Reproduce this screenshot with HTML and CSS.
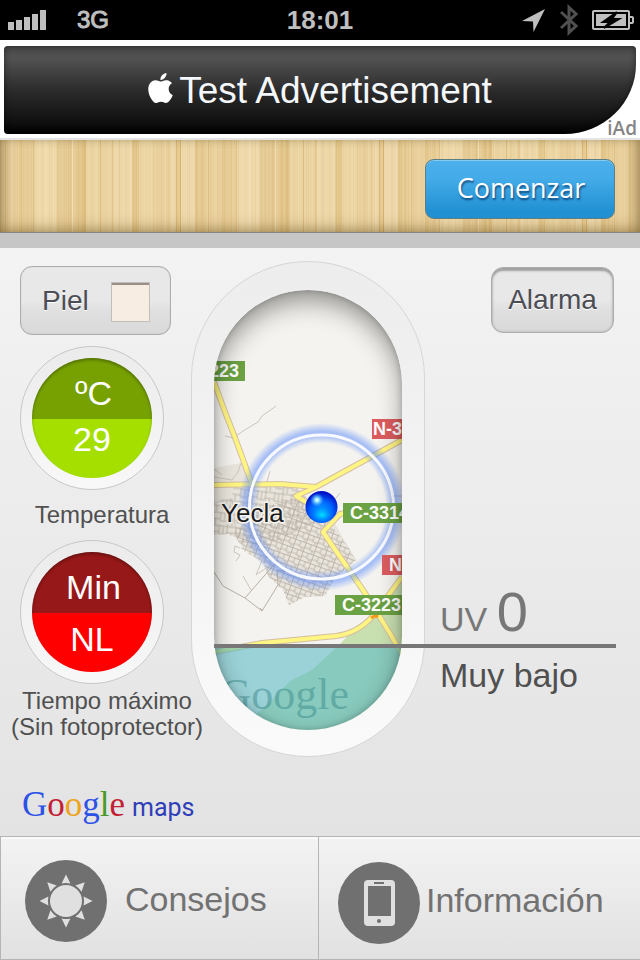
FILE: index.html
```html
<!DOCTYPE html>
<html lang="es">
<head>
<meta charset="utf-8">
<meta name="viewport" content="width=device-width, initial-scale=1">
<title>UV</title>
<link rel="stylesheet" href="styles.css">
</head>
<body>
<header class="status">
  <div class="status-left">
    <svg class="signal" width="38" height="20" viewBox="0 0 38 20" aria-hidden="true"><path d="M0 12h6v8H0zM8 10h6v10H8zM16 7h6v13h-6zM24 4h6v16h-6zM32 0h6v20h-6z"/></svg>
    <span class="network">3G</span>
  </div>
  <span class="clock">18:01</span>
  <div class="status-right">
    <svg width="23" height="23" viewBox="0 0 23 23" aria-hidden="true"><path d="M0 12 23 0 11.500 23 11 12.500z"/></svg>
    <svg class="bluetooth" width="18" height="32" viewBox="0 0 18 32" aria-hidden="true"><path d="M1 8 16 22 9 28.500V3.500L16 10 1 24"/></svg>
    <svg width="42" height="20" viewBox="0 0 42 20" aria-hidden="true">
      <path fill-rule="evenodd" d="M2 0h34q2 0 2 2v4h2q2 0 2 2v4q0 2-2 2h-2v4q0 2-2 2H2q-2 0-2-2V2q0-2 2-2zM2 2v16h34V2zM38 8v4h2V8z"/>
      <path d="M4 4h30v12H4z"/>
      <path class="bolt" d="M25 2 11 12h7l-6 6 15-9h-7z"/>
    </svg>
  </div>
</header>

<aside class="ad">
  <a class="ad-banner" href="#">
    <svg width="25" height="30" viewBox="2 0 20 24" aria-hidden="true"><path d="M12.152 6.896c-.948 0-2.415-1.078-3.960-1.040-2.040.027-3.910 1.183-4.961 3.014-2.117 3.675-.546 9.103 1.519 12.090 1.013 1.454 2.208 3.090 3.792 3.039 1.520-.065 2.090-.987 3.935-.987 1.831 0 2.350.987 3.960.948 1.637-.026 2.676-1.480 3.676-2.948 1.156-1.688 1.636-3.325 1.662-3.415-.039-.013-3.182-1.221-3.220-4.857-.026-3.040 2.480-4.494 2.597-4.559-1.429-2.090-3.623-2.324-4.390-2.376-2-.156-3.675 1.090-4.610 1.090zM15.530 3.830c.843-1.012 1.400-2.427 1.245-3.830-1.207.052-2.662.805-3.532 1.818-.780.896-1.454 2.338-1.273 3.714 1.338.104 2.715-.688 3.559-1.701"/></svg>
    <span>Test Advertisement</span>
  </a>
  <span class="ad-tag">iAd</span>
</aside>

<div class="toolbar">
  <button class="start" type="button">Comenzar</button>
</div>

<main class="main">
  <section class="gauges">
    <button class="key skin" type="button">Piel <span class="swatch"></span></button>
    <figure class="gauge">
      <div class="dial dial-green"><div class="disc"><span>ºC</span><span>29</span></div></div>
      <figcaption>Temperatura</figcaption>
    </figure>
    <figure class="gauge gauge-time">
      <div class="dial dial-red"><div class="disc"><span>Min</span><span>NL</span></div></div>
      <figcaption>Tiempo máximo<br>(Sin fotoprotector)</figcaption>
    </figure>
    <div class="maps-logo"><span class="google"><span class="blue">G</span><span class="red">o</span><span class="gold">o</span><span class="blue">g</span><span class="green">l</span><span class="red">e</span></span><span class="maps">maps</span></div>
  </section>

  <section class="capsule">
    <div class="map">
      <svg viewBox="214 290 188 440" role="img" aria-label="Yecla">
        <defs>
          <pattern id="streets" width="11" height="9" patternUnits="userSpaceOnUse" patternTransform="rotate(20)">
            <path class="street" d="M0 .5H11M0 5H6M6 6H11M.5 0V9M6 0V6M9 6V9"/>
          </pattern>
          <pattern id="blocks" width="17" height="13" patternUnits="userSpaceOnUse" patternTransform="rotate(7)">
            <path class="street" d="M0 1H17M0 7H10M10 9H17M1 0V13M10 0V9M14 1V9M5 7V13"/>
          </pattern>
          <radialGradient id="ball" cx=".5" cy=".65" r=".6">
            <stop offset="0" stop-color="#00a8ff"/><stop offset=".55" stop-color="#0068ff"/><stop offset="1" stop-color="#0010c8"/>
          </radialGradient>
          <radialGradient id="shine"><stop offset="0" stop-color="#fff"/><stop offset=".3" stop-color="#8fe4ff"/><stop offset="1" stop-color="#40a0ff" stop-opacity="0"/></radialGradient>
          <radialGradient id="low-light"><stop offset="0" stop-color="#00e4ff"/><stop offset="1" stop-color="#00a0ff" stop-opacity="0"/></radialGradient>
          <radialGradient id="halo" gradientUnits="userSpaceOnUse" cx="321.500" cy="507" r="84">
            <stop offset=".76" stop-color="#4a80ff" stop-opacity="0"/><stop offset=".85" stop-color="#4a80ff" stop-opacity=".45"/><stop offset=".9" stop-color="#4a80ff" stop-opacity=".45"/><stop offset="1" stop-color="#4a80ff" stop-opacity="0"/>
          </radialGradient>
        </defs>
        <rect class="land" x="214" y="290" width="188" height="440"/>
        <path class="park" d="M402 575 375 613 353 630 341 643 312 670 290 681 272 700 250 720V730H402z"/>
        <path class="town" d="M214 468 241 463 252 486 296 487 308 499 332 518 347 545 356 560 335 578 325 596 305 597 289 605 283 590 268 576 263 562 248 554 243 543 229 534 214 535z"/>
        <path class="blocks" d="M234 484 296 487 308 499 320 520 270 545 248 549 229 534 214 535V500L232 499z"/>
        <path class="streets" d="M262 508 300 496 325 518 347 545 356 560 335 578 325 596 305 597 289 605 283 590 268 576 263 562 242 550 234 532z"/>
        <path class="lane" d="M214 477 232 480 238 472 241 463M214 503 232 499 236 533M214 469 222 475M266 485 270 471M340 493 332 503M392 496H402M392 496V506M225 436 233 438 243 431 258 422 262 416 276 406"/>
        <path class="lane" d="M240 548 235 546 234 552 240 555 236 561M243 576 251 590M256 575 263 558 272 564 256 575"/>
        <path class="path" d="M214 572 223 586 245 598 278 560M245 598 262 611 278 585 277 570 300 574M263 611 260 608"/>
        <g class="road-edge">
          <path d="M214 382 225 412 234 435 252 484"/><path d="M214 485 280 484 316 487 402 440"/>
          <path d="M316 487 296 496 308 503M345 513 340 514 323 532 365 593 391 635 402 655"/>
          <path d="M214 652 262 643 336 636Q358 633 373 616L402 577"/>
        </g>
        <g class="road">
          <path d="M214 382 225 412 234 435 252 484"/><path d="M214 485 280 484 316 487 402 440"/>
          <path d="M316 487 296 496 308 503M345 513 340 514 323 532 365 593 391 635 402 655"/>
          <path d="M214 652 262 643 336 636Q358 633 373 616L402 577"/>
        </g>
        <path class="junction" d="M371 618q4-3 7-1"/>
        <circle cx="321.500" cy="507" r="84" fill="url(#halo)"/>
        <circle class="range" cx="321.500" cy="507" r="72"/>
        <g class="sign">
          <path class="local" d="M214 361h31v20h-31zM343 503h59v20h-59zM335 595h67v20h-67z"/>
          <path class="national" d="M372 419h30v20h-30zM382 555h20v20h-20z"/>
          <text x="209" y="377">223</text><text x="350" y="519">C-3314</text><text x="342" y="611">C-3223</text>
          <text x="373" y="435">N-3</text><text x="389" y="571">N</text>
        </g>
        <text class="place" x="221" y="522">Yecla</text>
        <circle cx="321.500" cy="507" r="16" fill="url(#ball)"/>
        <ellipse cx="322" cy="515" rx="10" ry="7" fill="url(#low-light)"/>
        <circle cx="317" cy="500" r="7" fill="url(#shine)"/>
        <rect class="level" x="214" y="646" width="188" height="84"/>
        <text class="watermark" x="349" y="709" text-anchor="end">Google</text>
      </svg>
    </div>
  </section>

  <section class="side">
    <button class="key alarm" type="button">Alarma</button>
    <div class="reading">
      <p class="uv">UV <strong>0</strong></p>
      <p class="risk">Muy bajo</p>
    </div>
  </section>
</main>

<nav class="tabs">
  <a class="tab tab-tips" href="#">
    <svg width="82" height="82" viewBox="-41 -41 82 82" aria-hidden="true">
      <circle class="badge" r="41"/><circle r="16"/>
      <path id="ray" d="M0-26.500 4.400-17.600Q0-18.600-4.400-17.600z"/>
      <use href="#ray" transform="rotate(45)"/><use href="#ray" transform="rotate(90)"/><use href="#ray" transform="rotate(135)"/><use href="#ray" transform="rotate(180)"/><use href="#ray" transform="rotate(225)"/><use href="#ray" transform="rotate(270)"/><use href="#ray" transform="rotate(315)"/>
    </svg>
    <span>Consejos</span>
  </a>
  <a class="tab tab-info" href="#">
    <svg width="82" height="82" viewBox="-41 -41 82 82" aria-hidden="true">
      <circle class="badge" r="41"/><rect x="-15" y="-23" width="31" height="46" rx="4"/>
      <path class="badge" d="M-11-17h23v30h-23zM-5-21H5v2H-5z"/><circle class="badge" cy="18" r="2"/>
    </svg>
    <span>Información</span>
  </a>
</nav>
</body>
</html>
```

FILE: styles.css
```css
* { box-sizing: border-box; }

body {
  margin: 0;
  min-height: 100vh;
  display: flex;
  flex-direction: column;
  font-family: "Liberation Sans", Arial, sans-serif;
  color: #505050;
  background: #e4e4e4;
}

button { font: inherit; cursor: pointer; }
a { color: inherit; text-decoration: none; }
p, figure { margin: 0; }

/* Status bar */
.status {
  height: 40px;
  display: grid;
  grid-template-columns: 1fr auto 1fr;
  align-items: center;
  padding: 0 8px;
  background: #000;
  color: #bfbfbf;
  fill: #bfbfbf;
}
.status-left, .status-right { display: flex; align-items: center; }
.status-left { gap: 31px; }
.status-right { justify-content: flex-end; gap: 15px; margin-right: -2px; }
.status-right svg:last-child { margin-left: -1px; }
.network { font-size: 24px; -webkit-text-stroke: 1px #bfbfbf; }
.clock { font-size: 26px; font-weight: bold; }
.bluetooth path { fill: none; stroke: #505050; stroke-width: 3px; }
.bolt { fill: #000; stroke: #000; stroke-width: 2px; }

/* Advertisement */
.ad {
  position: relative;
  padding: 6px 4px 4px;
  background: #fff;
  border-bottom: 2px solid #e4e4e4;
}
.ad-banner {
  height: 88px;
  display: flex;
  align-items: center;
  justify-content: center;
  gap: 6px;
  padding-top: 2px;
  color: #f4f7fb;
  fill: #fff;
  font-size: 37px;
  border-radius: 4px 4px 72px 4px / 4px 4px 70px 4px;
  background: linear-gradient(#484848, #525252 14%, #2a2a2a 52%, #101010 86%, #000);
  box-shadow: inset 0 0 6px rgba(0, 0, 0, .5);
}
.ad-banner svg { margin-bottom: 6px; }
.ad-tag {
  position: absolute;
  right: 3px;
  bottom: -2px;
  font: 600 19px/24px "Open Sans", sans-serif;
  color: #858585;
}

/* Wooden toolbar */
.toolbar {
  height: 108px;
  padding: 19px 25px;
  display: flex;
  justify-content: flex-end;
  align-items: flex-start;
  border-bottom: 15px solid #c6c6c6;
  box-shadow: inset 0 -1px #858585, inset 0 -14px 14px -8px rgba(110, 80, 30, .35), inset 8px 0 12px -4px rgba(90, 70, 30, .45), inset -8px 0 12px -4px rgba(90, 70, 30, .45);
  background:
    repeating-linear-gradient(90deg, rgba(180, 130, 50, .06) 0 1px, transparent 1px 4px, rgba(255, 245, 210, .1) 4px 5px, transparent 5px 7px),
    repeating-linear-gradient(90deg, rgba(180, 130, 50, .08) 0 1px, transparent 1px 11px, rgba(255, 245, 210, .12) 11px 13px, transparent 13px 17px),
    repeating-linear-gradient(90deg,
      #e9cf9a 0 5px, #dfc084 5px 6px, #e9cf9c 6px 19px, #e4c88e 19px 22px, #e7cb95 22px 33px, #dfc086 33px 34px,
      #efd9aa 34px 57px, #e5c993 57px 72px, #f3e0b5 72px 73px, #e6ca93 73px 78px, #e0c285 78px 86px, #ebd4a2 86px 100px,
      #dcbd80 100px 101px, #ecd4a2 101px 112px, #e6ca93 112px 114px, #edd7a8 114px 132px, #e3c78c 132px 139px, #ecd5a3 139px 156px,
      #e9cf9c 156px 170px, #eed8aa 170px 176px, #dab979 176px 177px, #e6ca91 177px 180px, #d6b26d 180px 181px, #eed8ab 181px 195px, #e3c68c 195px 203px);
}
.start {
  width: 190px;
  height: 60px;
  padding: 0 0 4px 2px;
  border: 1px solid #5b7d83;
  border-radius: 9px;
  color: #fff;
  font-family: "Open Sans", sans-serif;
  font-size: 27px;
  text-shadow: 1px 2px 2px rgba(0, 40, 90, .7);
  background: linear-gradient(#4bb0ec, #45ace9 30%, #2090d2 90%);
  box-shadow: inset 0 1px #85cbf3;
}

/* Main panel */
.main {
  flex: 1;
  display: grid;
  grid-template-columns: 191px 234px 1fr;
  background: linear-gradient(#f3f3f3, #ebebeb 50%, #e3e3e3);
}
.key {
  border: 1px solid #adadad;
  border-radius: 12px;
  color: #4c4d55;
  font-size: 28px;
  text-shadow: 0 1px #fff;
  background: linear-gradient(#e8e8e8 50%, #e0e0e0 65%, #d9d9d9);
}
.gauges { padding: 18px 0 0 20px; }
.skin {
  width: 151px;
  height: 69px;
  padding: 0 20px 0 21px;
  display: flex;
  align-items: center;
  justify-content: space-between;
  box-shadow: inset 0 0 1px #aaa;
}
.swatch {
  width: 39px;
  height: 40px;
  margin-top: 2px;
  border: 1px solid #c2bfbb;
  background: #f7ede3;
  box-shadow: inset 0 2px #9c8f89;
}
.gauge { padding-top: 11px; font-size: 24px; line-height: 26px; }
.gauge figcaption {
  width: 174px;
  padding-top: 12px;
  margin-left: -5px;
  text-align: center;
  white-space: nowrap;
}
.dial {
  width: 144px;
  height: 144px;
  padding: 11px;
  border: 1px solid #c8c8c8;
  border-radius: 50%;
  background: linear-gradient(#ebebeb, #f8f8f8);
}
.disc {
  height: 120px;
  border-radius: 50%;
  display: grid;
  grid-template-rows: 61px 1fr;
  justify-items: center;
  color: #fff;
  font-size: 34px;
  line-height: 36px;
  box-shadow: inset 0 2px 3px rgba(0, 0, 0, .3);
}
.disc span:first-child { padding: 17px 0 0 3px; }
.disc span:last-child { padding-top: 2px; }
.dial-green .disc { background: linear-gradient(#76a100 61px, #a5df00 61px); }
.dial-red .disc { background: linear-gradient(#971818 61px, #f00 61px); }
.dial-red .disc span:last-child { padding-top: 8px; }
.gauge-time { padding-top: 12px; }
.gauge-time figcaption { width: 194px; margin-left: -10px; padding-top: 4px; }
.maps-logo {
  display: flex;
  align-items: baseline;
  gap: 7px;
  padding: 45px 0 0 2px;
  line-height: 40px;
}
.google { font-family: "Liberation Serif", serif; font-size: 35px; }
.maps { font-family: Roboto, sans-serif; font-size: 25px; color: #2f3fb8; }
.blue { color: #2c52e6; }
.red { color: #c21e34; }
.gold { color: #eda31c; }
.green { color: #4a9a24; }

/* Map capsule */
.capsule {
  align-self: start;
  margin-top: 13px;
  padding: 28px 22px 26px;
  border: 1px solid #d6d6d6;
  border-radius: 117px;
  background: linear-gradient(#ededed, #fafafa);
}
.map { position: relative; border-radius: 94px; overflow: hidden; }
.map svg { display: block; width: 100%; }
.map::after {
  content: "";
  position: absolute;
  inset: 0;
  border-radius: inherit;
  box-shadow: inset 0 12px 26px -2px rgba(0, 0, 0, .42), inset 0 0 6px rgba(0, 0, 0, .2);
}
.land { fill: #f4f3ef; }
.park { fill: #c8dfb0; }
.town { fill: #e9e5dc; }
.streets { fill: url(#streets); }
.blocks { fill: url(#blocks); }
.street { fill: none; stroke: #b3a9a0; stroke-width: 1px; opacity: .75; }
.lane { fill: none; stroke: #cbc5bb; stroke-width: 1px; }
.path { fill: none; stroke: #b7afa5; stroke-width: 1px; }
.road-edge, .road { fill: none; stroke-linejoin: round; }
.road-edge { stroke: #d5bfa0; stroke-width: 6px; }
.road { stroke: #fff582; stroke-width: 4px; }
.junction { fill: none; stroke: #f49a20; stroke-width: 3px; }
.range { fill: none; stroke: #fff; stroke-opacity: .92; stroke-width: 3px; }
.sign { fill: #fff; font-size: 18px; font-weight: bold; }
.sign .local { fill: #6ba243; }
.sign .national { fill: #dc5c5e; }
.place { fill: #1c1c1c; font-size: 26px; stroke: #f4f3ef; stroke-width: 3px; paint-order: stroke; }
.level { fill: #5dbdc6; fill-opacity: .6; }
.watermark { fill: #3d8b8c; fill-opacity: .5; font-family: "Liberation Serif", serif; font-size: 44px; }

/* UV reading */
.side { display: flex; flex-direction: column; align-items: flex-end; padding: 19px 24px 0 15px; }
.alarm {
  width: 123px;
  height: 66px;
  margin-right: 2px;
  padding: 0;
  box-shadow: inset 0 3px 2px #a2a2a2, inset 0 0 3px #b0b0b0;
}
.reading { position: relative; align-self: stretch; margin-top: 247px; font-size: 34px; }
.uv { height: 64px; line-height: 64px; color: #777; }
.uv strong { font-size: 56px; font-weight: normal; }
.risk { padding-top: 11px; line-height: 40px; }
.reading::before {
  content: "";
  position: absolute;
  top: 64px;
  left: -226px;
  right: 0;
  height: 4px;
  background: #777;
}

/* Bottom tabs */
.tabs {
  display: grid;
  grid-template-columns: 318px 1fr;
  border: solid #b5b5b5;
  border-width: 1px 0 1px 1px;
}
.tab {
  height: 122px;
  display: flex;
  align-items: center;
  color: #727272;
  fill: #e0e0e0;
  font-size: 34px;
  background: linear-gradient(#f3f3f3, #e1e1e1);
  box-shadow: inset 0 2px #fafafa;
}
.tab span { padding-bottom: 4px; }
.tab-tips { gap: 18px; padding: 6px 0 0 24px; border-right: 1px solid #b5b5b5; }
.tab-info { gap: 6px; padding: 9px 0 0 19px; }
.badge { fill: #707070; }
```
